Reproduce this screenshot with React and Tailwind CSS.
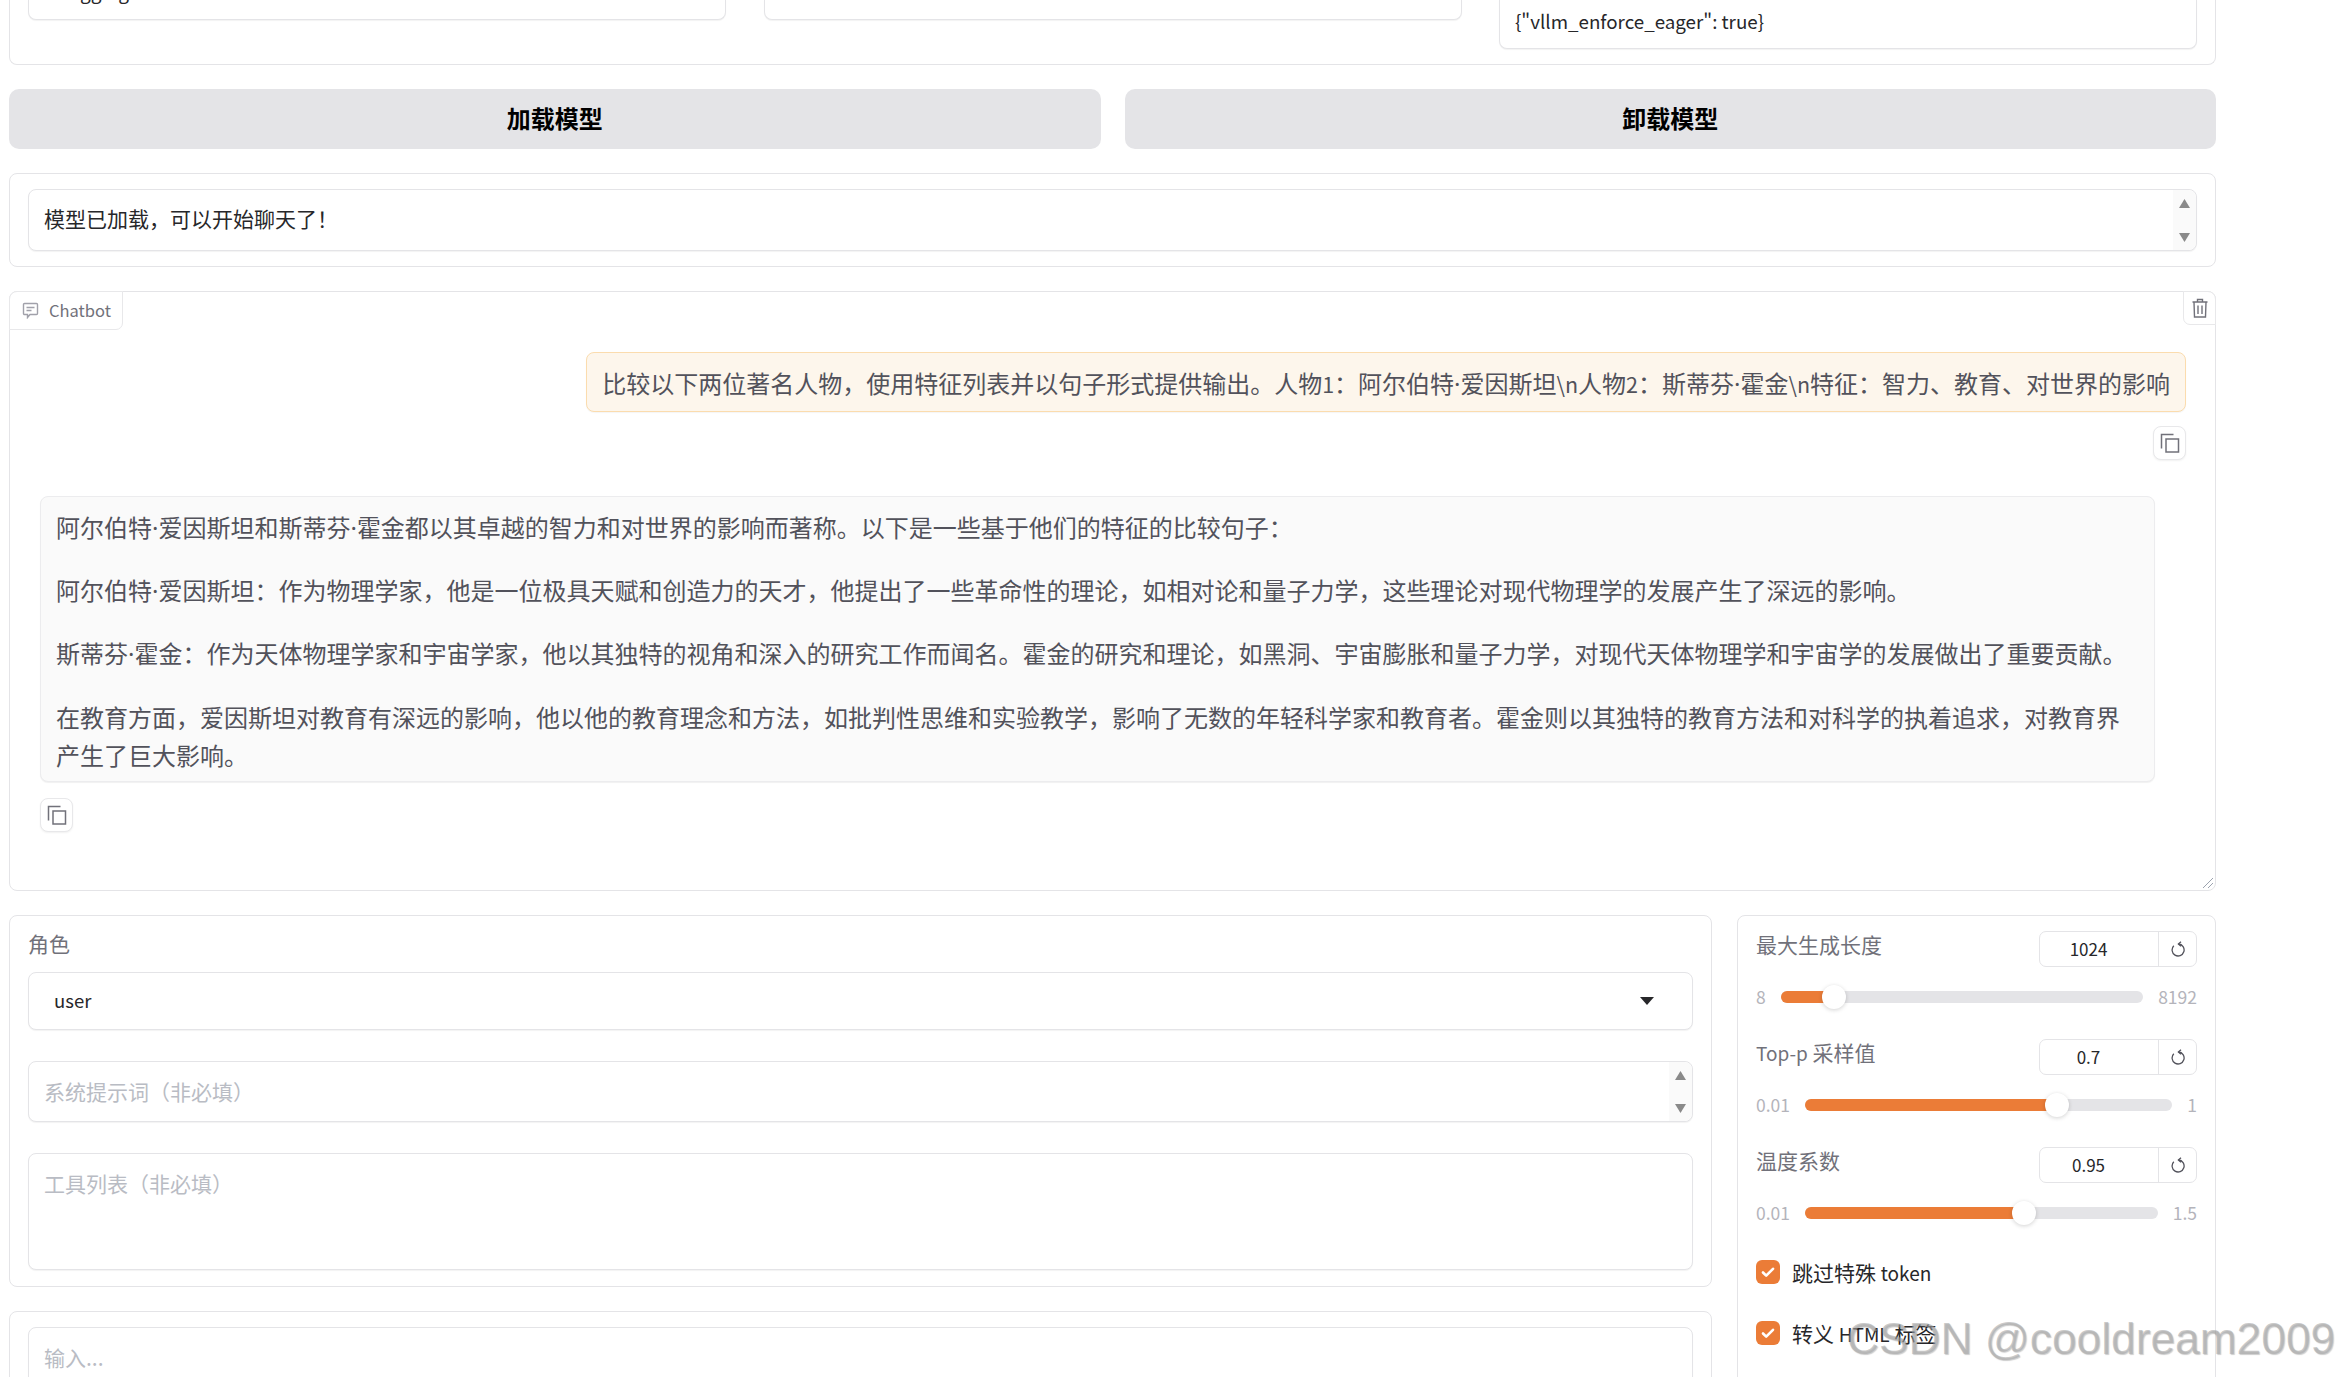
import React from 'react';

const sliders = [
  { label: '最大生成长度', value: '1024', min: '8', max: '8192', pct: 14.8 },
  { label: <><span className="text-[19px] leading-none">Top-p</span> 采样值</>, value: '0.7', min: '0.01', max: '1', pct: 68.6 },
  { label: '温度系数', value: '0.95', min: '0.01', max: '1.5', pct: 62.2 },
];

const question = '比较以下两位著名人物\uFF0C使用特征列表并以句子形式提供输出。人物1\uFF1A阿尔伯特·爱因斯坦\\n人物2\uFF1A斯蒂芬·霍金\\n特征\uFF1A智力、教育、对世界的影响';

const answers = [
  '阿尔伯特·爱因斯坦和斯蒂芬·霍金都以其卓越的智力和对世界的影响而著称。以下是一些基于他们的特征的比较句子\uFF1A',
  '阿尔伯特·爱因斯坦\uFF1A作为物理学家\uFF0C他是一位极具天赋和创造力的天才\uFF0C他提出了一些革命性的理论\uFF0C如相对论和量子力学\uFF0C这些理论对现代物理学的发展产生了深远的影响。',
  '斯蒂芬·霍金\uFF1A作为天体物理学家和宇宙学家\uFF0C他以其独特的视角和深入的研究工作而闻名。霍金的研究和理论\uFF0C如黑洞、宇宙膨胀和量子力学\uFF0C对现代天体物理学和宇宙学的发展做出了重要贡献。',
  '在教育方面\uFF0C爱因斯坦对教育有深远的影响\uFF0C他以他的教育理念和方法\uFF0C如批判性思维和实验教学\uFF0C影响了无数的年轻科学家和教育者。霍金则以其独特的教育方法和对科学的执着追求\uFF0C对教育界产生了巨大影响。',
];

const boxClass = 'rounded-[8px] border border-[#e4e4e7] bg-white shadow-[0_1px_1px_rgba(0,0,0,0.05)]';

// the reference has a narrower latin font and a narrow middle dot
const chatText = (text) =>
  text.split(/(·|\\n|\d)/).map((part, i) => {
    if (part === '·') return <span key={i} className="font-['Noto_Sans',sans-serif] leading-none">·</span>;
    if (i % 2 === 1) return <span key={i} className="text-[21.5px] leading-none">{part}</span>;
    return part;
  });

const CopyButton = () => (
  <button className="flex h-[34px] w-[33px] items-center justify-center rounded-[8px] border border-[#e8e8ea] bg-white shadow-[0_1px_2px_rgba(0,0,0,0.06)]">
    <svg width="20" height="20" viewBox="0 0 20 20" fill="none" stroke="#71717a" strokeWidth="1.5">
      <path d="M1.5 15.5V1.5h12" />
      <rect x="6" y="6" width="12.5" height="13" />
    </svg>
  </button>
);

const ScrollArrows = () => (
  <div className="flex w-[23px] flex-col items-center justify-between rounded-r-[8px] bg-[#fafafa] pb-[8px] pt-[9px]">
    <svg width="11" height="9" viewBox="0 0 11 9" fill="#8a8a8a"><path d="M5.5 0L11 9H0z" /></svg>
    <svg width="11" height="9" viewBox="0 0 11 9" fill="#8a8a8a"><path d="M0 0h11L5.5 9z" /></svg>
  </div>
);

const Slider = ({ item }) => (
  <div>
    <div className="flex items-start justify-between">
      <span className="text-[21px] leading-[27px] text-[#71717a]">{item.label}</span>
      <div className="flex h-[36px] w-[158px] rounded-[7px] border border-[#e4e4e7] text-[17px]">
        <div className="flex flex-1 items-center justify-center pb-[1px] pr-[21px] text-[#27272a]">{item.value}</div>
        <div className="flex w-[38px] items-center justify-center border-l border-[#e4e4e7]">
          <svg width="14" height="16" viewBox="0 0 14 16" fill="none" stroke="#52525b" strokeWidth="1.3">
            <path d="M2.8 4.8A6 6 0 1 0 7.6 3" />
            <path d="M10 0.8L7.4 3l2.6 2.2" />
          </svg>
        </div>
      </div>
    </div>
    <div className="mt-[18px] flex h-[24px] items-center gap-[15px] text-[17.5px] text-[#b4b4bb]">
      <span>{item.min}</span>
      <div className="relative h-[12px] flex-1 rounded-full bg-[#e4e4e7]">
        <div className="h-full rounded-l-full bg-[#eb7c37]" style={{ width: `${item.pct}%` }} />
        <div
          className="absolute top-[-6px] ml-[-12px] h-[24px] w-[24px] rounded-full bg-white shadow-[0_1px_4px_rgba(0,0,0,0.18)]"
          style={{ left: `${item.pct}%` }}
        />
      </div>
      <span>{item.max}</span>
    </div>
  </div>
);

const Check = ({ children }) => (
  <div className="flex items-center gap-[12px]">
    <div className="flex h-[24px] w-[24px] items-center justify-center rounded-[6px] bg-[#eb7c37]">
      <svg width="16" height="16" viewBox="0 0 16 16" fill="none" stroke="#fff" strokeWidth="2.6" strokeLinecap="round" strokeLinejoin="round">
        <path d="M3 8.5l3.2 3.2L13 4.8" />
      </svg>
    </div>
    <span className="text-[21px] leading-[24px] text-[#27272a]">{children}</span>
  </div>
);

export default function App() {
  return (
    <div lang="zh-CN" className="relative h-screen overflow-hidden bg-white pl-[9px] pr-[124px] font-['Noto_Sans_CJK_SC','Noto_Sans',sans-serif]">
      {/* top panel, scrolled off the page */}
      <div className="flex h-[65px] items-start gap-[37.5px] rounded-b-[8px] border-x border-b border-[#e4e4e7] px-[18px]">
        <div className={`flex h-[20px] w-[698px] shrink-0 items-end rounded-t-none border-t-0 pb-[19px] pl-[34px] text-[19px] leading-none text-[#27272a] ${boxClass}`}>
          logging
        </div>
        <div className={`h-[20px] w-[698px] shrink-0 rounded-t-none border-t-0 ${boxClass}`} />
        <div className={`h-[49px] w-[698px] shrink-0 rounded-t-none border-t-0 pl-[15px] pt-[6px] text-[18.75px] leading-[30px] text-[#27272a] ${boxClass}`}>
          {'{"vllm_enforce_eager": true}'}
        </div>
      </div>

      <div className="mt-[24px] flex gap-[24px]">
        <button className="h-[60px] flex-1 rounded-[10px] bg-[#e4e4e7] pb-[2px] text-[24px] font-bold text-black">加载模型</button>
        <button className="h-[60px] flex-1 rounded-[10px] bg-[#e4e4e7] pb-[2px] text-[24px] font-bold text-black">卸载模型</button>
      </div>

      {/* status */}
      <div className="mt-[24px] rounded-[8px] border border-[#e4e4e7] px-[18px] py-[15px]">
        <div className={`flex h-[62px] ${boxClass}`}>
          <div className="flex flex-1 items-center pb-[2px] pl-[15px] text-[21px] text-[#27272a]">{'模型已加载\uFF0C可以开始聊天了\uFF01'}</div>
          <ScrollArrows />
        </div>
      </div>

      {/* chatbot */}
      <div className="relative mt-[24px] flex h-[600px] flex-col rounded-[8px] border border-[#e4e4e7]">
        <div className="absolute left-[-1px] top-[-1px] flex h-[39px] items-center gap-[10px] rounded-br-[7px] rounded-tl-[8px] border border-[#e8e8ea] bg-white pl-[12px] pr-[11px] text-[16.5px] text-[#71717a]">
          <svg width="17" height="17" viewBox="0 0 17 17" fill="none" stroke="#a1a1aa" strokeWidth="1.4">
            <path d="M2.5 1.5h12a1 1 0 0 1 1 1v9a1 1 0 0 1-1 1H8l-2.5 3v-3h-3a1 1 0 0 1-1-1v-9a1 1 0 0 1 1-1z" />
            <path d="M4.5 5.5h8M4.5 8.5h5" />
          </svg>
          Chatbot
        </div>
        <button className="absolute right-[-1px] top-[-1px] flex h-[34px] w-[33px] items-center justify-center rounded-bl-[7px] rounded-tr-[8px] border border-[#e8e8ea] bg-white">
          <svg width="16" height="20" viewBox="0 0 16 20" fill="none" stroke="#71717a" strokeWidth="1.4">
            <path d="M0.5 4h15M5.5 4V1.5h5V4M2 4l.5 15h11l.5-15M6 7.5v8.5M10 7.5v8.5" />
          </svg>
        </button>

        <div className="mr-[29px] mt-[60px] h-[60px] self-end rounded-[8px] border border-[#fbdcae] bg-[#fdf6ec] pl-[15px] pr-[15px] pt-[11px] text-[24px] leading-[38px] text-[#52525b] shadow-[0_1px_1px_rgba(0,0,0,0.04)]">
          {chatText(question)}
        </div>
        <div className="mr-[29px] mt-[14px] self-end">
          <CopyButton />
        </div>

        <div className="ml-[30px] mr-[60px] mt-[36px] rounded-[8px] border border-[#ececee] bg-[#fafafa] pb-[7px] pl-[15px] pr-[15px] pt-[11px] text-[24px] leading-[38.4px] text-[#52525b] shadow-[0_1px_1px_rgba(0,0,0,0.06)]">
          {answers.map((text, i) => (
            <p key={i} className={i > 0 ? 'mt-[24.8px]' : ''}>{chatText(text)}</p>
          ))}
        </div>
        <div className="ml-[30px] mt-[16px]">
          <CopyButton />
        </div>

        <svg className="absolute bottom-[1px] right-[1px]" width="12" height="12" viewBox="0 0 12 12" stroke="#9ca3af" strokeWidth="1">
          <path d="M11 1L1 11M11 6L6 11" />
        </svg>
      </div>

      <div className="mt-[24px] flex gap-[25px]">
        <div className="w-[1703px]">
          <div className="rounded-[8px] border border-[#e4e4e7] px-[18px] pb-[16px] pt-[14px]">
            <div className="h-[30px] text-[21px] leading-[27px] text-[#71717a]">角色</div>
            <div className={`mt-[12px] flex h-[58px] items-center justify-between pl-[25px] pr-[38px] text-[18.5px] text-[#27272a] ${boxClass}`}>
              user
              <svg width="14" height="8" viewBox="0 0 14 8" fill="#27272a"><path d="M0 0h14L7 8z" /></svg>
            </div>
            <div className={`mt-[31px] flex h-[61px] ${boxClass}`}>
              <textarea
                readOnly
                rows={1}
                placeholder={'系统提示词\uFF08非必填\uFF09'}
                className="flex-1 resize-none overflow-hidden bg-transparent pl-[15px] pt-[14px] text-[21px] leading-[30px] outline-none placeholder:text-[#b9bcc4]"
              />
              <ScrollArrows />
            </div>
            <textarea
              readOnly
              placeholder={'工具列表\uFF08非必填\uFF09'}
              className={`mt-[31px] block h-[117px] w-full resize-none overflow-hidden pl-[15px] pt-[14px] text-[21px] leading-[30px] outline-none placeholder:text-[#b9bcc4] ${boxClass}`}
            />
          </div>
          <div className="mt-[24px] h-[200px] rounded-[8px] border border-[#e4e4e7] px-[18px] pt-[15px]">
            <textarea
              readOnly
              placeholder="输入..."
              className={`block h-[150px] w-full resize-none overflow-hidden pl-[15px] pt-[14px] text-[21px] leading-[30px] outline-none placeholder:text-[#b9bcc4] ${boxClass}`}
            />
          </div>
        </div>

        <div className="h-[500px] flex-1 rounded-[8px] border border-[#e4e4e7] px-[18px] pt-[15px]">
          <div className="flex flex-col gap-[30px]">
            {sliders.map((item) => (
              <Slider key={item.value} item={item} />
            ))}
          </div>
          <div className="mt-[35px] flex flex-col gap-[37px]">
            <Check>跳过特殊 <span className="text-[19px] leading-none">token</span></Check>
            <Check>转义 <span className="text-[19px] leading-none">HTML</span> 标签</Check>
          </div>
        </div>
      </div>

      <div className="pointer-events-none absolute bottom-[13px] left-[1847px] whitespace-nowrap font-['Liberation_Sans',sans-serif] text-[44.3px] leading-[50px] text-[#a8a8a8]/60 [text-shadow:1px_1px_1px_rgba(0,0,0,0.2)]">
        CSDN @cooldream2009
      </div>
    </div>
  );
}
